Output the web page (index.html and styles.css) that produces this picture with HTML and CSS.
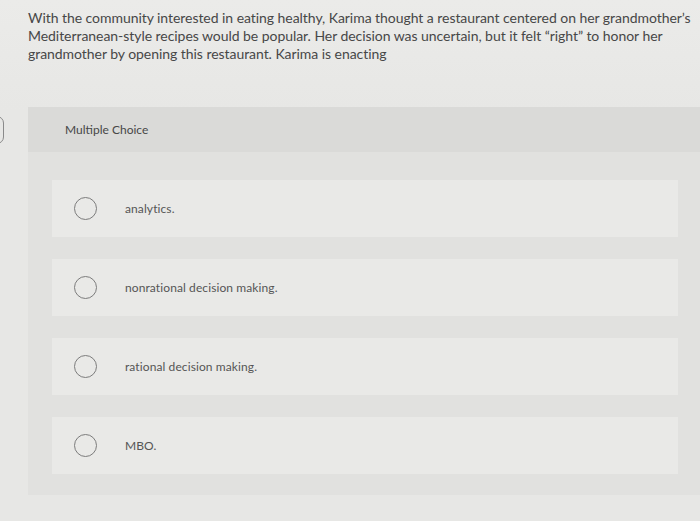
FILE: index.html
```html
<!DOCTYPE html>
<html>
<head>
<meta charset="utf-8">
<link rel="stylesheet" href="styles.css">
</head>
<body>
<div class="page">
  <p class="question">With the community interested in eating healthy, Karima thought a restaurant centered on her grandmother’s Mediterranean-style recipes would be popular. Her decision was uncertain, but it felt “right” to honor her grandmother by opening this restaurant. Karima is enacting</p>
  <div class="edge-mark"></div>
  <section class="panel">
    <div class="panel-head">Multiple Choice</div>
    <div class="panel-body">
      <div class="option"><span class="radio"></span><span class="label">analytics.</span></div>
      <div class="option"><span class="radio"></span><span class="label">nonrational decision making.</span></div>
      <div class="option"><span class="radio"></span><span class="label">rational decision making.</span></div>
      <div class="option"><span class="radio"></span><span class="label">MBO.</span></div>
    </div>
  </section>
</div>
</body>
</html>
```

FILE: styles.css
```css
html, body {
  margin: 0;
  padding: 0;
}
body {
  background: #e7e7e5;
  font-family: "Lato", "Liberation Sans", sans-serif;
  width: 700px;
  height: 521px;
  overflow: hidden;
}
.page {
  position: relative;
  background: linear-gradient(#ebebe9, #e7e7e5 110px);
  height: 521px;
}
.question {
  margin: 0;
  padding: 9px 0 0 28px;
  font-size: 14px;
  letter-spacing: -0.05px;
  line-height: 18px;
  color: #474747;
  height: 98px;
  box-sizing: border-box;
}
.edge-mark {
  position: absolute;
  left: -10px;
  top: 116px;
  width: 12px;
  height: 26px;
  border: 1.5px solid #8a8a8a;
  border-radius: 8px;
}
.panel {
  margin: 9px 0 0 28px;
  background: #e1e1df;
}
.panel-head {
  height: 45px;
  display: flex;
  align-items: center;
  padding-left: 37px;
  background: #dadad8;
  font-size: 12px;
  color: #474747;
}
.panel-body {
  display: flex;
  flex-direction: column;
  gap: 22px;
  padding: 28px 22px 21px 24px;
}
.option {
  height: 57px;
  background: #e9e9e7;
  display: flex;
  align-items: center;
  padding-left: 22px;
}
.radio {
  width: 21px;
  height: 21px;
  border: 1.5px solid #7c7c7c;
  border-radius: 50%;
  flex: none;
}
.label {
  margin-left: 28px;
  font-size: 12px;
  letter-spacing: 0.1px;
  color: #555;
}
```
